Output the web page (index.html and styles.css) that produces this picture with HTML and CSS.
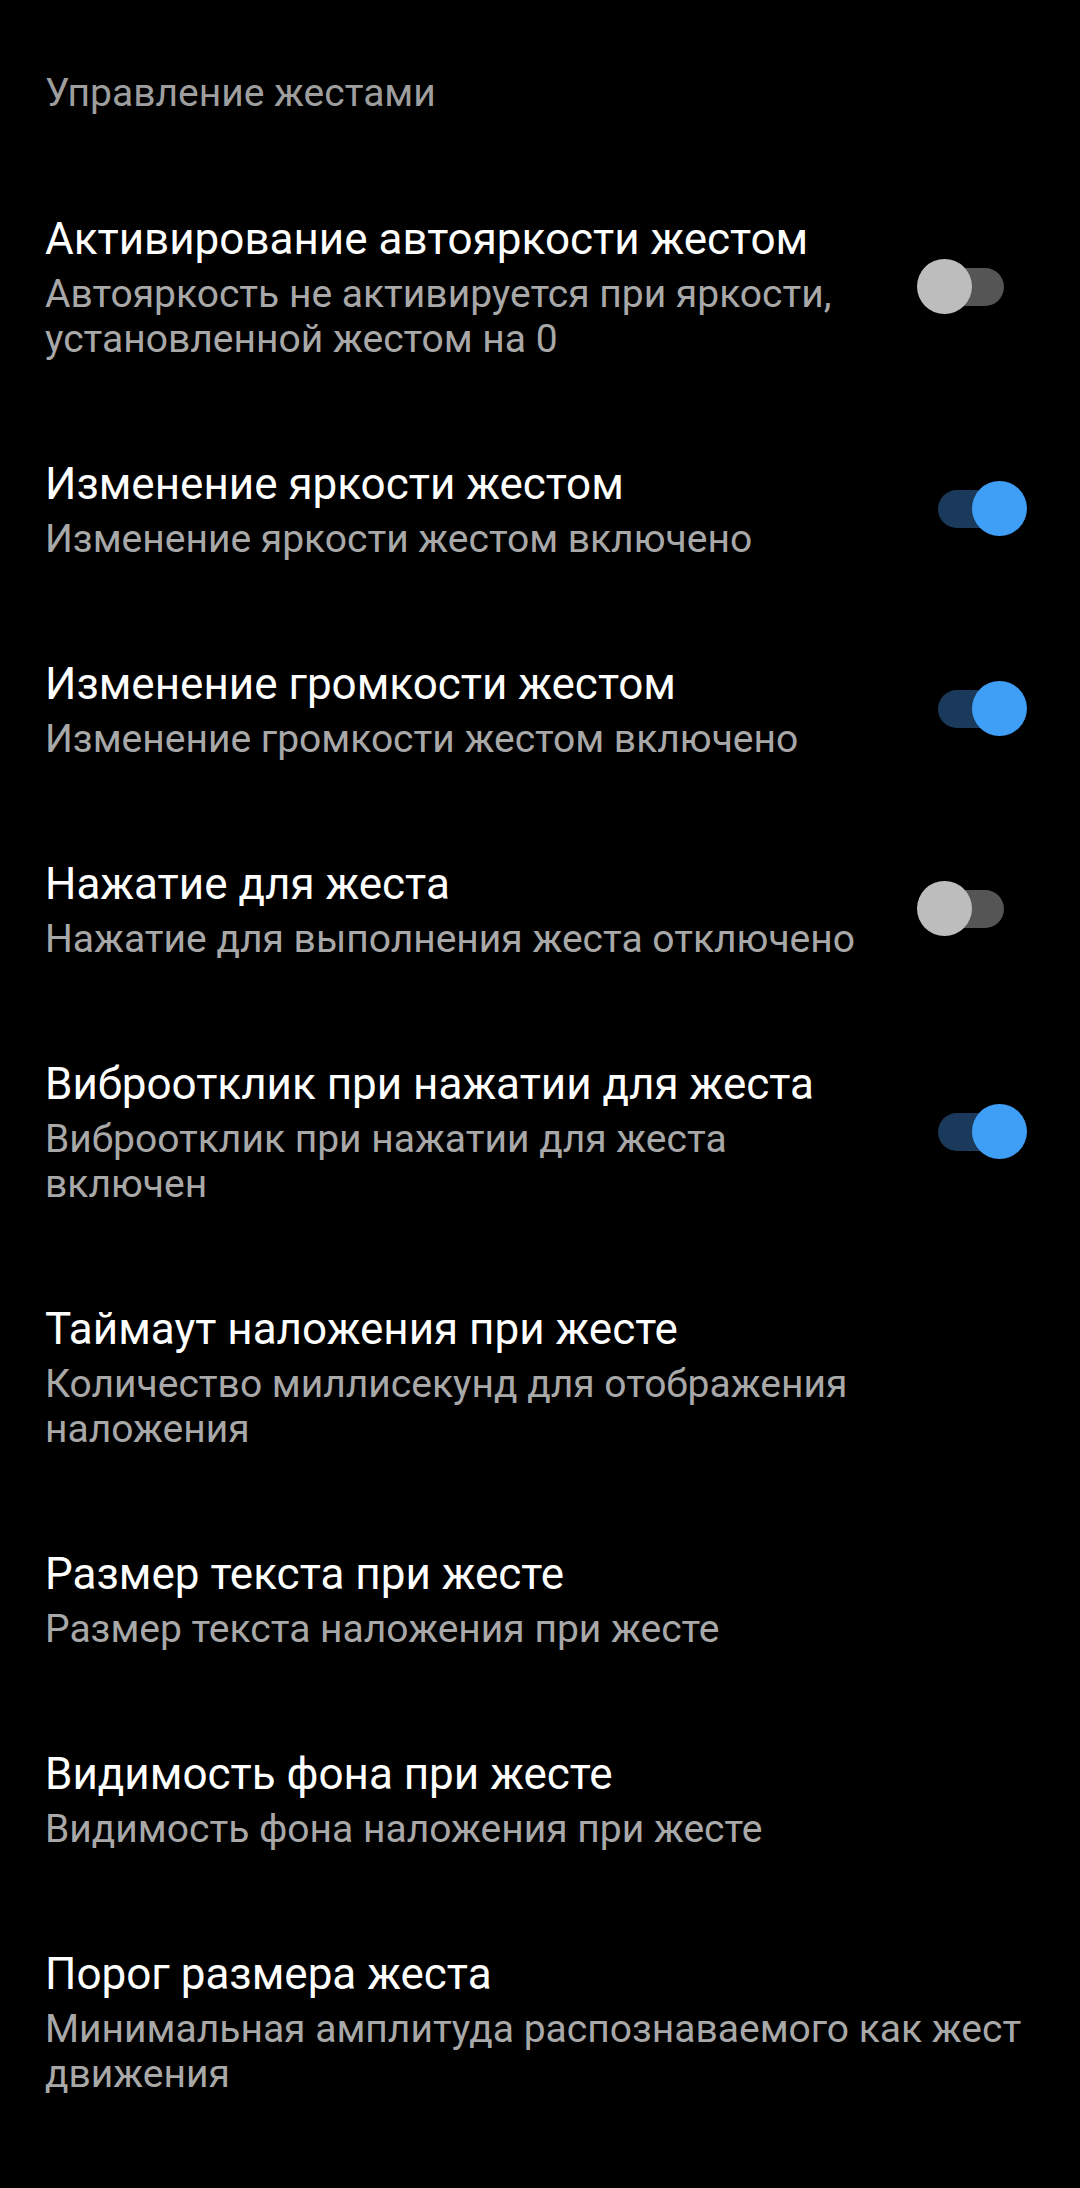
FILE: index.html
```html
<!DOCTYPE html>
<html lang="ru">
<head>
    <meta charset="UTF-8">
    <meta name="viewport" content="width=device-width, initial-scale=1.0">
    <title>Управление жестами</title>
    <link rel="stylesheet" href="styles.css">
</head>
<body>
    <header class="section-title">Управление жестами</header>
    <section class="prefs">
        <div class="pref">
            <div class="pref-text">
                <div class="pref-title">Активирование автояркости жестом</div>
                <div class="pref-summary">Автояркость не активируется при яркости, установленной жестом на 0</div>
            </div>
            <div class="switch"><span class="track"></span><span class="thumb"></span></div>
        </div>
        <div class="pref">
            <div class="pref-text">
                <div class="pref-title">Изменение яркости жестом</div>
                <div class="pref-summary">Изменение яркости жестом включено</div>
            </div>
            <div class="switch on"><span class="track"></span><span class="thumb"></span></div>
        </div>
        <div class="pref">
            <div class="pref-text">
                <div class="pref-title">Изменение громкости жестом</div>
                <div class="pref-summary">Изменение громкости жестом включено</div>
            </div>
            <div class="switch on"><span class="track"></span><span class="thumb"></span></div>
        </div>
        <div class="pref">
            <div class="pref-text">
                <div class="pref-title">Нажатие для жеста</div>
                <div class="pref-summary">Нажатие для выполнения жеста отключено</div>
            </div>
            <div class="switch"><span class="track"></span><span class="thumb"></span></div>
        </div>
        <div class="pref">
            <div class="pref-text">
                <div class="pref-title">Виброотклик при нажатии для жеста</div>
                <div class="pref-summary">Виброотклик при нажатии для жеста включен</div>
            </div>
            <div class="switch on"><span class="track"></span><span class="thumb"></span></div>
        </div>
        <div class="pref">
            <div class="pref-text">
                <div class="pref-title">Таймаут наложения при жесте</div>
                <div class="pref-summary">Количество миллисекунд для отображения наложения</div>
            </div>
        </div>
        <div class="pref">
            <div class="pref-text">
                <div class="pref-title">Размер текста при жесте</div>
                <div class="pref-summary">Размер текста наложения при жесте</div>
            </div>
        </div>
        <div class="pref">
            <div class="pref-text">
                <div class="pref-title">Видимость фона при жесте</div>
                <div class="pref-summary">Видимость фона наложения при жесте</div>
            </div>
        </div>
        <div class="pref">
            <div class="pref-text">
                <div class="pref-title">Порог размера жеста</div>
                <div class="pref-summary">Минимальная амплитуда распознаваемого как жест движения</div>
            </div>
        </div>
    </section>
</body>
</html>
```

FILE: styles.css
```css
body {
    font-family: Roboto, "Noto Sans", sans-serif;
    margin: 0;
    padding: 0;
    background: #000;
    color: #fff;
}

.section-title {
    padding: 68px 45px 46px;
    font-size: 39px;
    line-height: 50px;
    color: #9e9e9e;
}

.pref {
    display: flex;
    align-items: center;
    padding: 47px 45px;
}

.pref-text {
    flex: 1;
    min-width: 0;
}

.pref-title {
    font-size: 44px;
    line-height: 56px;
    margin-bottom: 5px;
    color: #fff;
}

.pref-summary {
    font-size: 39px;
    line-height: 45px;
    color: #a8a8a8;
}

.switch {
    position: relative;
    flex: none;
    width: 110px;
    height: 56px;
    margin-left: 40px;
    margin-right: 8px;
}

.switch .track {
    position: absolute;
    left: 21px;
    right: 23px;
    top: 9px;
    height: 38px;
    border-radius: 19px;
    background: #555;
}

.switch .thumb {
    position: absolute;
    left: 0;
    top: 0;
    width: 55px;
    height: 55px;
    border-radius: 50%;
    background: #bdbdbd;
}

.switch.on .track {
    background: #1b3a5b;
}

.switch.on .thumb {
    left: auto;
    right: 0;
    background: #3f9ff6;
}
```
